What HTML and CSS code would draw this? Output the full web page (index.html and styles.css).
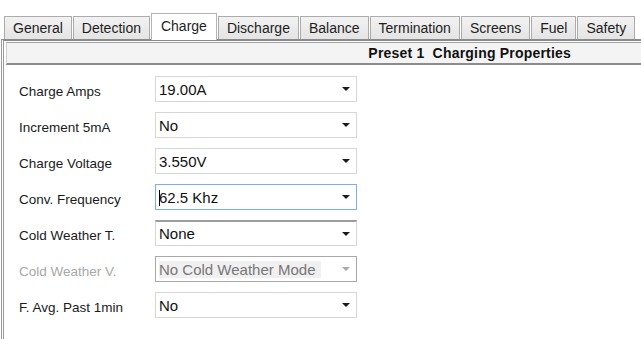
FILE: index.html
```html
<!DOCTYPE html>
<html lang="en">
<head>
  <meta charset="UTF-8" />
  <title>Charge Settings</title>
  <link rel="stylesheet" href="styles.css">
</head>
<body>
  <div class="tabs">
    <div class="tab">General</div>
    <div class="tab">Detection</div>
    <div class="tab active">Charge</div>
    <div class="tab">Discharge</div>
    <div class="tab">Balance</div>
    <div class="tab">Termination</div>
    <div class="tab">Screens</div>
    <div class="tab">Fuel</div>
    <div class="tab">Safety</div>
  </div>

  <div class="panel">
    <div class="title-bar">Preset 1&nbsp; Charging Properties</div>

    <div class="rows">
      <div class="row">
        <span class="label">Charge Amps</span>
        <div class="combo"><span>19.00A</span><i class="arrow"></i></div>
      </div>
      <div class="row">
        <span class="label">Increment 5mA</span>
        <div class="combo"><span>No</span><i class="arrow"></i></div>
      </div>
      <div class="row">
        <span class="label">Charge Voltage</span>
        <div class="combo"><span>3.550V</span><i class="arrow"></i></div>
      </div>
      <div class="row">
        <span class="label">Conv. Frequency</span>
        <div class="combo focused"><span><b class="caret"></b>62.5 Khz</span><i class="arrow"></i></div>
      </div>
      <div class="row">
        <span class="label">Cold Weather T.</span>
        <div class="combo pressed"><span>None</span><i class="arrow"></i></div>
      </div>
      <div class="row disabled">
        <span class="label">Cold Weather V.</span>
        <div class="combo"><span>No Cold Weather Mode</span><i class="arrow"></i></div>
      </div>
      <div class="row">
        <span class="label">F. Avg. Past 1min</span>
        <div class="combo"><span>No</span><i class="arrow"></i></div>
      </div>
    </div>
  </div>
</body>
</html>
```

FILE: styles.css
```css
body {
  margin: 0;
  font-family: 'Liberation Sans', Arial, sans-serif;
  background-color: #ffffff;
  color: #1a1a1a;
  height: 339px;
  overflow: hidden;
}
.tabs {
  display: flex;
  align-items: flex-end;
  padding: 13px 0 0 4px;
  height: 26px;
}
.tab {
  height: 23px;
  line-height: 23px;
  padding: 0 8px;
  margin-right: 1px;
  font-size: 14px;
  color: #1e1e1e;
  background: linear-gradient(#f2f2f2, #e4e4e4);
  border: 1px solid #acacac;
  border-bottom: none;
  box-sizing: border-box;
}
.tab.active {
  height: 27px;
  line-height: 25px;
  padding: 0 9px;
  background: #ffffff;
  border-color: #b5b5b5;
  margin: 0 1px -1px 0;
  position: relative;
}
.panel {
  margin-left: 1px;
  border-left: 3px double #9a9a9a;
  border-top: 2px solid #8a8a8a;
  height: 300px;
  padding: 1px 0 0 2px;
}
.title-bar {
  background-color: #f4f4f4;
  border-top: 1px solid #a0a0a0;
  border-bottom: 2px solid #8c8c8c;
  border-left: 1px solid #d0d0d0;
  height: 20px;
  line-height: 20px;
  font-size: 14px;
  letter-spacing: 0.2px;
  font-weight: bold;
  color: #111;
  text-align: right;
  padding-right: 70px;
}
.rows {
  display: flex;
  flex-direction: column;
  gap: 10px;
  padding: 11px 0 0 13px;
}
.row {
  display: flex;
  align-items: center;
  height: 26px;
}
.label {
  width: 136px;
  padding-top: 4px;
  font-size: 13.5px;
  color: #1a1a1a;
}
.combo {
  width: 202px;
  height: 26px;
  box-sizing: border-box;
  border: 1px solid #d6d6d6;
  background: #ffffff;
  display: flex;
  align-items: center;
  justify-content: space-between;
  padding: 0 6px 0 3px;
  font-size: 15px;
  color: #111;
}
.combo.focused {
  border-color: #7ab0e6;
}
.combo.pressed {
  border-top: 2px solid #9c9c9c;
}
.caret {
  display: inline-block;
  width: 1px;
  height: 16px;
  background: #000;
  vertical-align: -3px;
  margin-right: -1px;
}
.arrow {
  width: 0;
  height: 0;
  border-left: 4px solid transparent;
  border-right: 4px solid transparent;
  border-top: 4px solid #1a1a1a;
}
.disabled .label {
  color: #a8a8a8;
}
.disabled .combo {
  border-color: #a8a8a8;
  background: #ffffff;
  color: #777;
}
.disabled .combo span {
  background: #f0f0f0;
  padding-right: 6px;
}
.disabled .arrow {
  border-top-color: #a8a8a8;
}
```
